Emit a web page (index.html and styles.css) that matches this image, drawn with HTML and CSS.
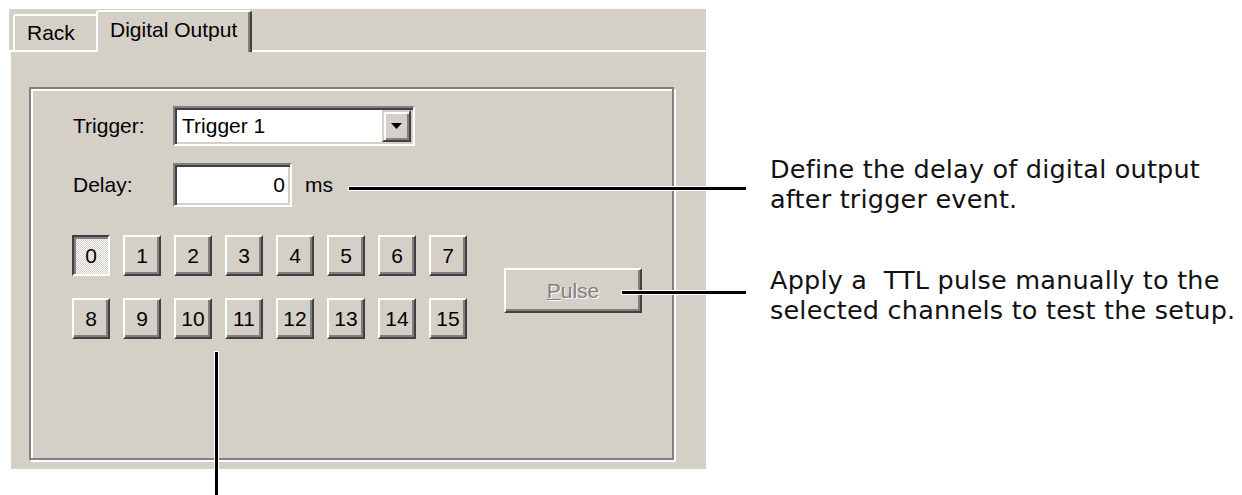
FILE: index.html
```html
<!DOCTYPE html>
<html>
<head>
<meta charset="utf-8">
<link rel="stylesheet" href="styles.css">
</head>
<body>
<div class="stage">
  <div class="window">
    <div class="tabs">
      <div class="tab">Rack</div>
      <div class="tab active">Digital Output</div>
    </div>
    <div class="panel">
      <div class="group">
        <div class="row row-trigger">
          <span class="label">Trigger:</span>
          <div class="combo">
            <span class="combo-text">Trigger 1</span>
            <span class="combo-btn"><svg width="11" height="6" viewBox="0 0 11 6"><polygon points="0,0 11,0 5.5,6" fill="#000"/></svg></span>
          </div>
        </div>
        <div class="row row-delay">
          <span class="label">Delay:</span>
          <div class="edit">0</div>
          <span class="unit">ms</span>
        </div>
        <div class="io">
          <div class="channels">
            <div class="ch on">0</div><div class="ch">1</div><div class="ch">2</div><div class="ch">3</div>
            <div class="ch">4</div><div class="ch">5</div><div class="ch">6</div><div class="ch">7</div>
            <div class="ch">8</div><div class="ch">9</div><div class="ch">10</div><div class="ch">11</div>
            <div class="ch">12</div><div class="ch">13</div><div class="ch">14</div><div class="ch">15</div>
          </div>
          <div class="pulse"><u>P</u>ulse</div>
        </div>
      </div>
    </div>
  </div>
  <div class="notes">
    <p>Define the delay of digital output<br>after trigger event.</p>
    <p>Apply a&nbsp; TTL pulse manually to the<br>selected channels to test the setup.</p>
  </div>
  <div class="leader leader-delay"></div>
  <div class="leader leader-pulse"></div>
  <div class="leader leader-ch"></div>
</div>
</body>
</html>
```

FILE: styles.css
```css
html, body {
  margin: 0;
  background: #fff;
}
body {
  font-family: "Liberation Sans", Arial, sans-serif;
}
.stage {
  position: relative;
  display: flex;
  align-items: flex-start;
  padding-top: 9px;
  height: 495px;
  box-sizing: border-box;
  overflow: hidden;
}
.window {
  margin-left: 9px;
  width: 697px;
  height: 460px;
  background: #d4d0c8;
  display: flex;
  flex-direction: column;
  font-size: 21px;
  color: #000;
  flex-shrink: 0;
}
.tabs {
  height: 41px;
  display: flex;
  align-items: flex-end;
  padding-left: 4px;
  position: relative;
  z-index: 1;
}
.tab {
  box-sizing: border-box;
  height: 36px;
  width: 85px;
  border-top: 2px solid #fff;
  border-left: 2px solid #fff;
  border-radius: 3px 3px 0 0;
  padding-left: 12px;
  line-height: 34px;
  background: #d4d0c8;
  white-space: nowrap;
}
.tab.active {
  width: 156px;
  height: 42px;
  margin-left: -2px;
  margin-bottom: -2px;
  border-right: 2px solid #404040;
  box-shadow: inset -2px 0 #808080;
  line-height: 36px;
}
.panel {
  flex: 1;
  display: flex;
  flex-direction: column;
  border-top: 2px solid #fff;
  border-left: 2px solid #fff;
  padding: 35px 32px 9px 18px;
}
.group {
  flex: 1;
  box-sizing: border-box;
  border: 2px solid #808080;
  box-shadow: inset 2px 2px #fff, 2px 2px #fff;
  padding: 17px 0 0 41px;
}
.row {
  display: flex;
  align-items: center;
}
.label {
  width: 101px;
  padding-left: 1px;
  box-sizing: border-box;
}
.combo, .edit {
  box-sizing: border-box;
  border: 2px solid;
  border-color: #808080 #fff #fff #808080;
  box-shadow: inset 2px 2px #404040, inset -2px -2px #d4d0c8;
  background: #fff;
}
.combo {
  width: 242px;
  height: 40px;
  display: flex;
  align-items: stretch;
  padding: 2px 2px 2px 7px;
}
.combo-text {
  align-self: center;
}
.combo-btn {
  margin-left: auto;
  width: 29px;
  box-sizing: border-box;
  border: 2px solid;
  border-color: #d4d0c8 #404040 #404040 #d4d0c8;
  box-shadow: inset 2px 2px #fff, inset -2px -2px #808080;
  background: #d4d0c8;
  display: flex;
  align-items: center;
  justify-content: center;
}
.row-delay {
  margin-top: 17px;
}
.edit {
  width: 119px;
  height: 44px;
  text-align: right;
  padding-right: 5px;
  line-height: 40px;
}
.unit {
  margin-left: 13px;
}
.io {
  display: flex;
  align-items: flex-start;
  margin-top: 28px;
}
.channels {
  display: grid;
  grid-template-columns: repeat(8, 38px);
  grid-auto-rows: 41px;
  gap: 22px 13px;
}
.ch, .pulse {
  box-sizing: border-box;
  border: 2px solid;
  border-color: #fff #404040 #404040 #fff;
  box-shadow: inset -2px -2px #808080;
  background: #d4d0c8;
  display: flex;
  align-items: center;
  justify-content: center;
}
.ch.on {
  border-color: #404040 #fff #fff #404040;
  box-shadow: inset 2px 2px #808080;
  background: repeating-conic-gradient(#fff 0 25%, #d4d0c8 0 50%) 0 0 / 2px 2px;
}
.pulse {
  margin-left: 37px;
  margin-top: 33px;
  width: 138px;
  height: 45px;
  color: #808080;
  text-shadow: 1px 1px #fff;
}
.pulse u {
  text-decoration-thickness: 1px;
}
.notes {
  margin-left: 64px;
  padding-top: 145px;
  font-family: "DejaVu Sans", sans-serif;
  font-size: 25.5px;
  letter-spacing: 0.2px;
  line-height: 30px;
  color: #111;
  white-space: nowrap;
}
.notes p {
  margin: 0;
}
.notes p + p {
  margin-top: 51px;
}
.leader {
  position: absolute;
  background: #000;
  box-shadow: 0 0 0 1px #fff;
}
.leader-delay {
  left: 349px;
  top: 187px;
  width: 397px;
  height: 3px;
}
.leader-pulse {
  left: 622px;
  top: 291px;
  width: 124px;
  height: 3px;
}
.leader-ch {
  left: 215px;
  top: 352px;
  width: 3px;
  height: 143px;
}
```
